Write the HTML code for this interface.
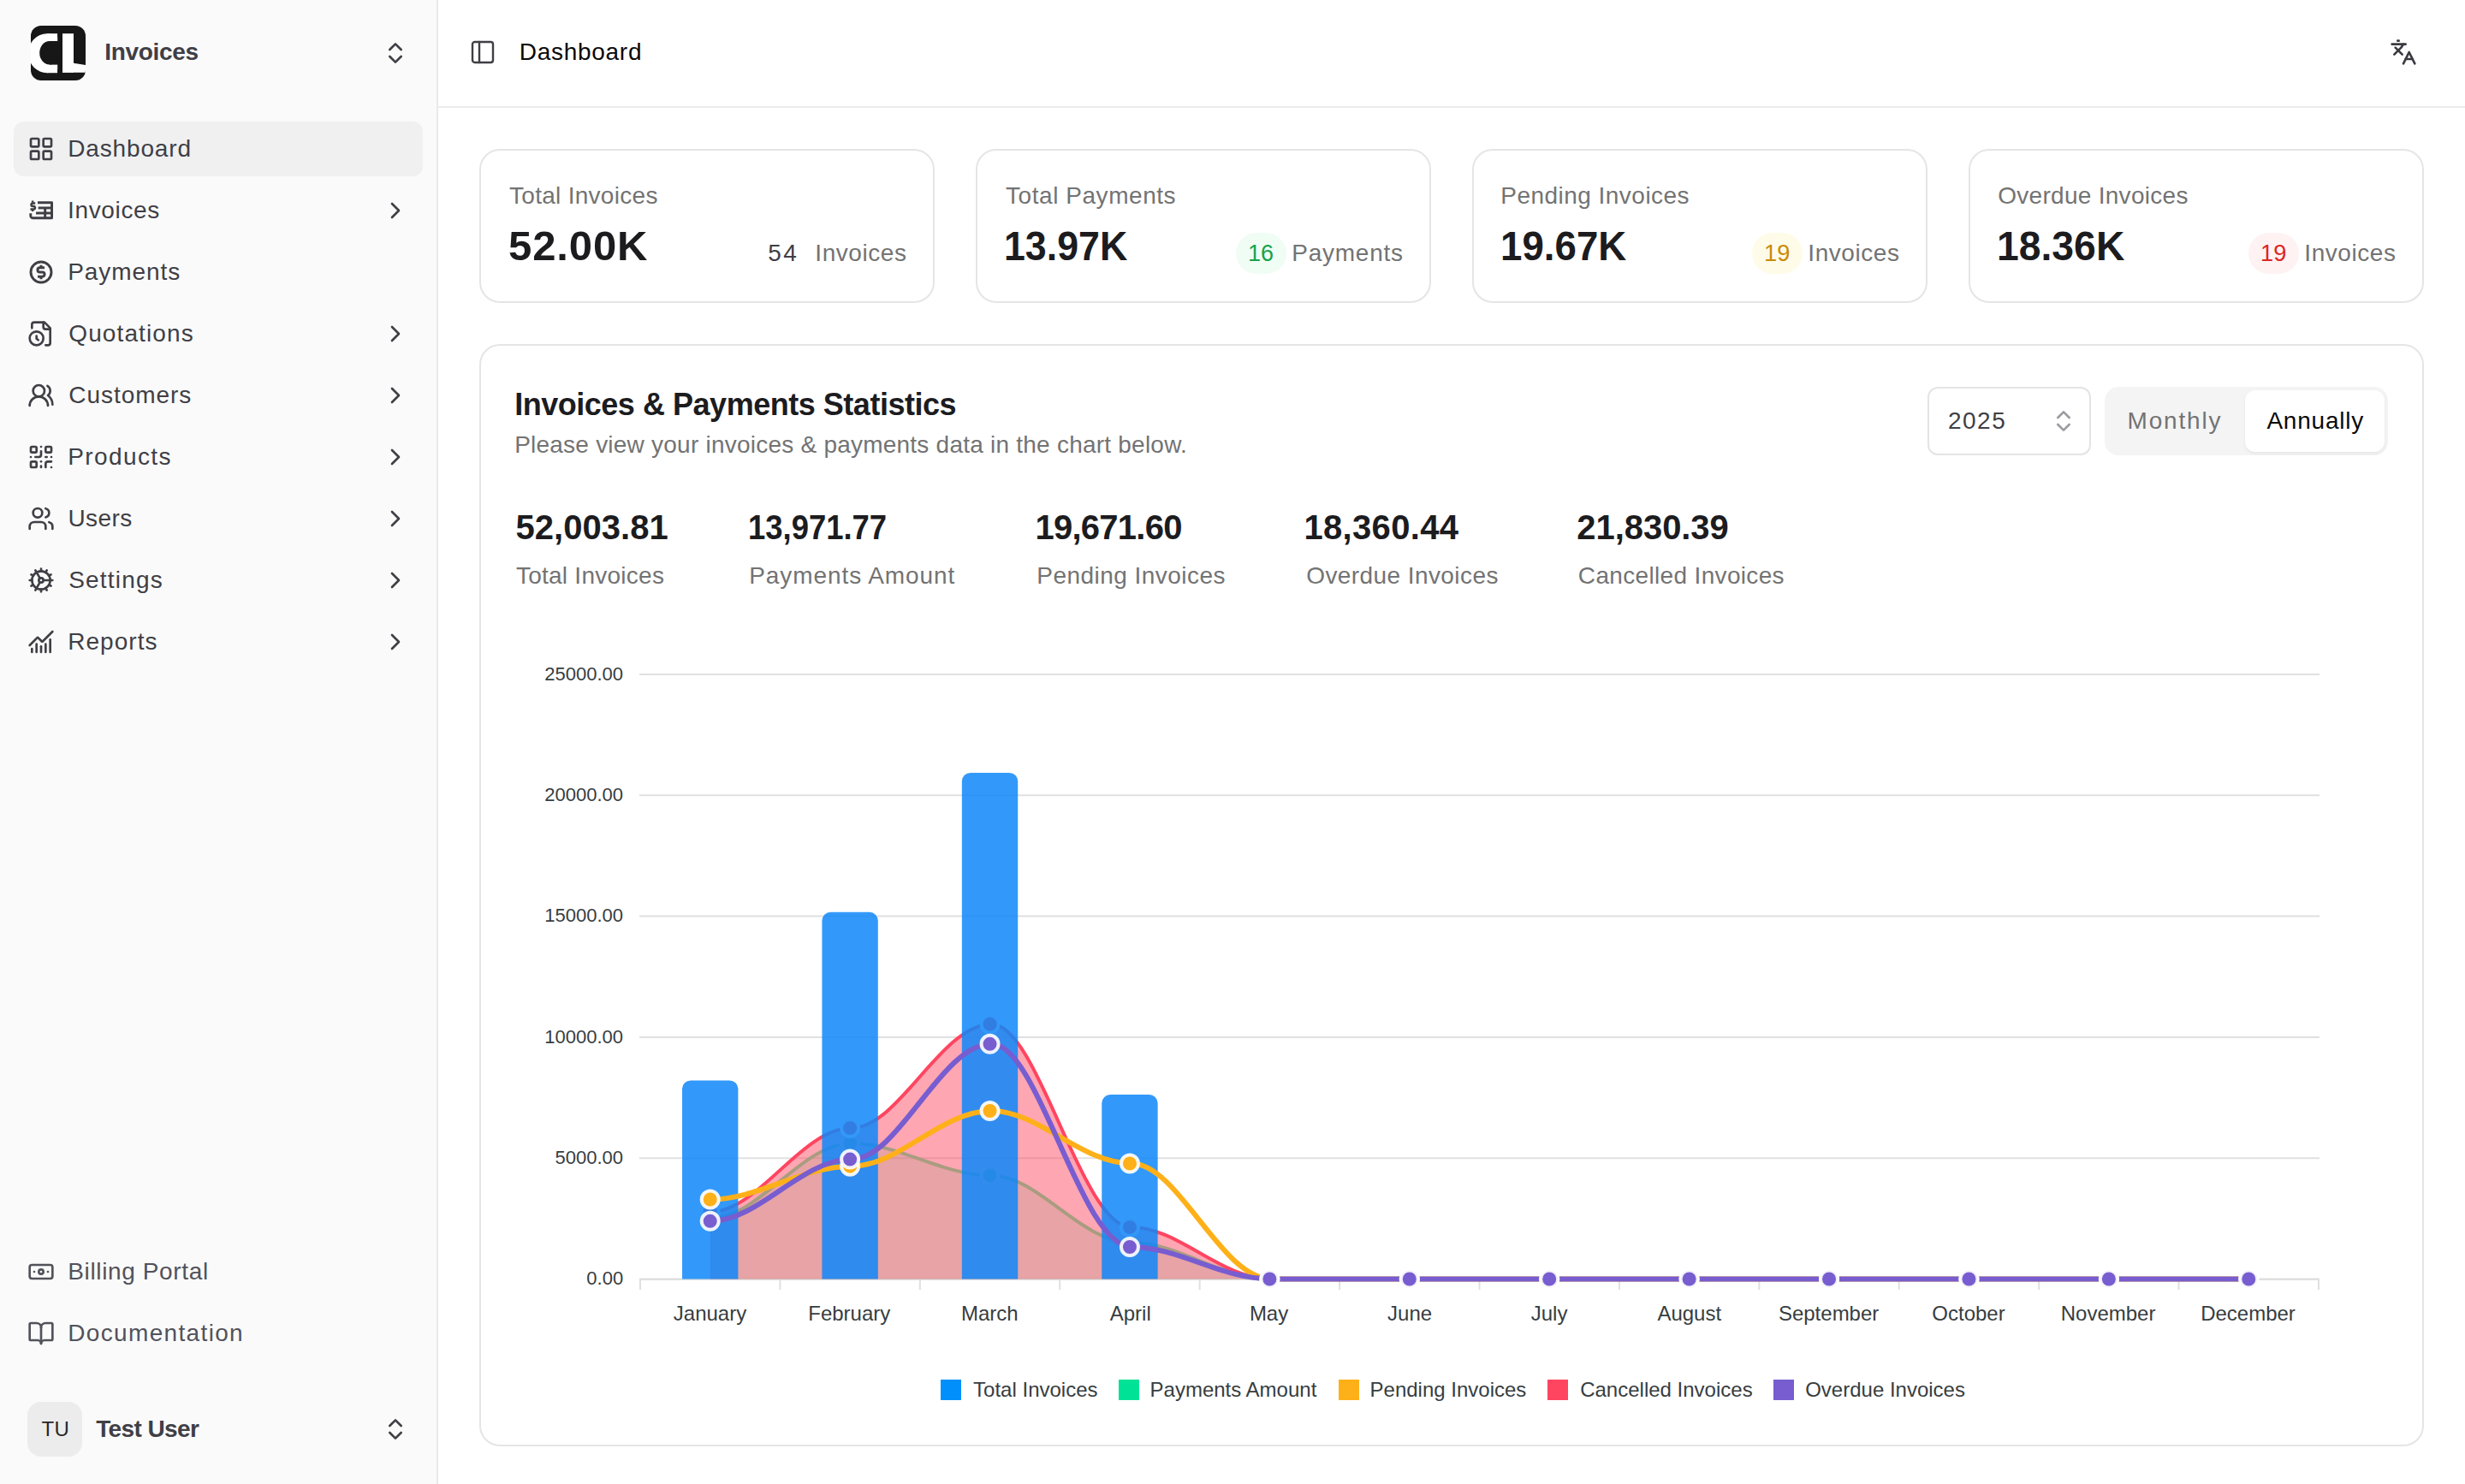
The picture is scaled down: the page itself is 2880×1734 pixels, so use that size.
<!DOCTYPE html>
<html><head><meta charset="utf-8"><title>Dashboard</title>
<style>
html,body{margin:0;padding:0;background:#fff;}
html{overflow:hidden;}
body{width:2880px;height:1734px;position:relative;overflow:hidden;font-family:"Liberation Sans",sans-serif;}
.t{position:absolute;white-space:nowrap;line-height:1;font-weight:400;}
.b{position:absolute;}
.i{position:absolute;overflow:visible;}
</style></head><body>
<div class="b" style="left:0px;top:0px;width:510px;height:1734px;background:#fafafa;"></div>
<div class="b" style="left:510px;top:0px;width:2px;height:1734px;background:#e9e9eb;"></div>
<svg class="i" style="left:36px;top:30px" width="64" height="64" viewBox="36 30 64 64">
<defs><clipPath id="lg"><rect x="36" y="30" width="64" height="64" rx="12"/></clipPath></defs>
<g clip-path="url(#lg)"><rect x="30" y="24" width="76" height="76" fill="#171717"/>
<ellipse cx="55" cy="62.2" rx="22" ry="23" fill="#fff"/><rect x="55" y="39.2" width="12.2" height="46" fill="#fff"/>
<ellipse cx="58" cy="61.8" rx="11.8" ry="13.8" fill="#171717"/><rect x="58" y="48" width="15" height="27.6" fill="#171717"/>
<rect x="67.2" y="30" width="5.8" height="64" fill="#171717"/>
<rect x="73" y="39.2" width="13" height="45.5" fill="#fff"/><path d="M73 75.5 L86 73.8 L100 76 V84.7 H73 Z" fill="#fff"/></g></svg>
<div class="t" style="left:122.25px;top:46.50px;font-size:28px;color:#3f3f46;letter-spacing:-0.321px;font-weight:700;">Invoices</div>
<svg class="i" style="left:446px;top:46px" width="32" height="32" viewBox="0 0 24 24" fill="none" stroke="#3f3f46" stroke-width="2" stroke-linecap="round" stroke-linejoin="round" ><path d="m7 15 5 5 5-5"/><path d="m7 9 5-5 5 5"/></svg>
<div class="b" style="left:16px;top:142px;width:478px;height:64px;background:#f0f0f1;border-radius:12px;"></div>
<svg class="i" style="left:32px;top:158px" width="32" height="32" viewBox="0 0 24 24" fill="none" stroke="#3f3f46" stroke-width="2" stroke-linecap="round" stroke-linejoin="round" ><rect width="7" height="7" x="3" y="3" rx="1"/><rect width="7" height="7" x="14" y="3" rx="1"/><rect width="7" height="7" x="14" y="14" rx="1"/><rect width="7" height="7" x="3" y="14" rx="1"/></svg>
<div class="t" style="left:79.25px;top:160.30px;font-size:28px;color:#3f3f46;letter-spacing:0.844px;">Dashboard</div>
<svg class="i" style="left:32px;top:230px" width="32" height="32" viewBox="0 0 24 24" fill="none" stroke="#3f3f46" stroke-width="2" stroke-linecap="round" stroke-linejoin="round" ><g stroke-width="2.2" stroke-linecap="butt" stroke-linejoin="round"><path d="M9 5H21.4V18.6H4.85a2 2 0 0 1-2-2V14.4"/><path d="M9.5 9.7H21.4"/><path d="M7.5 14.25H21.4"/><path d="M15.5 9.7V18.6"/></g><g stroke-width="1.9" stroke-linecap="butt"><path d="M6.9 5.6H4.7a1.3 1.3 0 0 0 0 2.6h0.7a1.3 1.3 0 0 1 0 2.6H2.6"/><path d="M4.6 3.4v1.6M4.6 11v1.7"/></g></svg>
<div class="t" style="left:79.00px;top:232.30px;font-size:28px;color:#3f3f46;letter-spacing:0.650px;">Invoices</div>
<svg class="i" style="left:446px;top:230px" width="32" height="32" viewBox="0 0 24 24" fill="none" stroke="#3f3f46" stroke-width="2" stroke-linecap="round" stroke-linejoin="round" ><path d="m9 18 6-6-6-6"/></svg>
<svg class="i" style="left:32px;top:302px" width="32" height="32" viewBox="0 0 24 24" fill="none" stroke="#3f3f46" stroke-width="2" stroke-linecap="round" stroke-linejoin="round" ><g stroke-width="2.2"><circle cx="12" cy="12" r="9"/><path stroke-linecap="butt" d="M15 8.1H10.9a1.95 1.95 0 0 0 0 3.9h2.2a1.95 1.95 0 0 1 0 3.9H9"/><path stroke-linecap="butt" d="M12 5.9v2M12 16.1v2"/></g></svg>
<div class="t" style="left:79.25px;top:304.30px;font-size:28px;color:#3f3f46;letter-spacing:0.936px;">Payments</div>
<svg class="i" style="left:32px;top:374px" width="32" height="32" viewBox="0 0 24 24" fill="none" stroke="#3f3f46" stroke-width="2" stroke-linecap="round" stroke-linejoin="round" ><path d="M16 22h2a2 2 0 0 0 2-2V7l-5-5H6a2 2 0 0 0-2 2v3"/><path d="M14 2v4a2 2 0 0 0 2 2h4"/><circle cx="8" cy="16" r="6"/><path d="M9.5 17.5 8 16.25V14"/></svg>
<div class="t" style="left:80.25px;top:376.30px;font-size:28px;color:#3f3f46;letter-spacing:1.117px;">Quotations</div>
<svg class="i" style="left:446px;top:374px" width="32" height="32" viewBox="0 0 24 24" fill="none" stroke="#3f3f46" stroke-width="2" stroke-linecap="round" stroke-linejoin="round" ><path d="m9 18 6-6-6-6"/></svg>
<svg class="i" style="left:32px;top:446px" width="32" height="32" viewBox="0 0 24 24" fill="none" stroke="#3f3f46" stroke-width="2" stroke-linecap="round" stroke-linejoin="round" ><path d="M18 21a8 8 0 0 0-16 0"/><circle cx="10" cy="8" r="5"/><path d="M22 20c0-3.37-2-6.5-4-8a5 5 0 0 0-.45-8.3"/></svg>
<div class="t" style="left:80.25px;top:448.30px;font-size:28px;color:#3f3f46;letter-spacing:0.969px;">Customers</div>
<svg class="i" style="left:446px;top:446px" width="32" height="32" viewBox="0 0 24 24" fill="none" stroke="#3f3f46" stroke-width="2" stroke-linecap="round" stroke-linejoin="round" ><path d="m9 18 6-6-6-6"/></svg>
<svg class="i" style="left:32px;top:518px" width="32" height="32" viewBox="0 0 24 24" fill="none" stroke="#3f3f46" stroke-width="2" stroke-linecap="round" stroke-linejoin="round" ><rect width="5" height="5" x="3" y="3" rx="1"/><rect width="5" height="5" x="16" y="3" rx="1"/><rect width="5" height="5" x="3" y="16" rx="1"/><path d="M21 16h-3a2 2 0 0 0-2 2v3"/><path d="M21 21v.01"/><path d="M12 7v3a2 2 0 0 1-2 2H7"/><path d="M3 12h.01"/><path d="M12 3h.01"/><path d="M12 16v.01"/><path d="M16 12h1"/><path d="M21 12v.01"/><path d="M12 21v-1"/></svg>
<div class="t" style="left:79.25px;top:520.30px;font-size:28px;color:#3f3f46;letter-spacing:1.393px;">Products</div>
<svg class="i" style="left:446px;top:518px" width="32" height="32" viewBox="0 0 24 24" fill="none" stroke="#3f3f46" stroke-width="2" stroke-linecap="round" stroke-linejoin="round" ><path d="m9 18 6-6-6-6"/></svg>
<svg class="i" style="left:32px;top:590px" width="32" height="32" viewBox="0 0 24 24" fill="none" stroke="#3f3f46" stroke-width="2" stroke-linecap="round" stroke-linejoin="round" ><path d="M16 21v-2a4 4 0 0 0-4-4H6a4 4 0 0 0-4 4v2"/><circle cx="9" cy="7" r="4"/><path d="M22 21v-2a4 4 0 0 0-3-3.87"/><path d="M16 3.13a4 4 0 0 1 0 7.75"/></svg>
<div class="t" style="left:79.50px;top:592.30px;font-size:28px;color:#3f3f46;letter-spacing:0.400px;">Users</div>
<svg class="i" style="left:446px;top:590px" width="32" height="32" viewBox="0 0 24 24" fill="none" stroke="#3f3f46" stroke-width="2" stroke-linecap="round" stroke-linejoin="round" ><path d="m9 18 6-6-6-6"/></svg>
<svg class="i" style="left:32px;top:662px" width="32" height="32" viewBox="0 0 24 24" fill="none" stroke="#3f3f46" stroke-width="2" stroke-linecap="round" stroke-linejoin="round" ><path d="M12 20a8 8 0 1 0 0-16 8 8 0 0 0 0 16Z"/><path d="M12 14a2 2 0 1 0 0-4 2 2 0 0 0 0 4Z"/><path d="M12 2v2"/><path d="M12 22v-2"/><path d="m17 20.66-1-1.73"/><path d="M11 10.27 7 3.34"/><path d="m20.66 17-1.73-1"/><path d="m3.34 7 1.73 1"/><path d="M14 12h8"/><path d="M2 12h2"/><path d="m20.66 7-1.73 1"/><path d="m3.34 17 1.73-1"/><path d="m17 3.34-1 1.73"/><path d="m11 13.73-4 6.93"/></svg>
<div class="t" style="left:80.25px;top:664.30px;font-size:28px;color:#3f3f46;letter-spacing:1.186px;">Settings</div>
<svg class="i" style="left:446px;top:662px" width="32" height="32" viewBox="0 0 24 24" fill="none" stroke="#3f3f46" stroke-width="2" stroke-linecap="round" stroke-linejoin="round" ><path d="m9 18 6-6-6-6"/></svg>
<svg class="i" style="left:32px;top:734px" width="32" height="32" viewBox="0 0 24 24" fill="none" stroke="#3f3f46" stroke-width="2" stroke-linecap="round" stroke-linejoin="round" ><path d="M12 16v5"/><path d="M16 14v7"/><path d="M20 10v11"/><path d="m22 3-8.646 8.646a.5.5 0 0 1-.708 0L9.354 8.354a.5.5 0 0 0-.707 0L2 15"/><path d="M4 18v3"/><path d="M8 14v7"/></svg>
<div class="t" style="left:79.25px;top:736.30px;font-size:28px;color:#3f3f46;letter-spacing:1.025px;">Reports</div>
<svg class="i" style="left:446px;top:734px" width="32" height="32" viewBox="0 0 24 24" fill="none" stroke="#3f3f46" stroke-width="2" stroke-linecap="round" stroke-linejoin="round" ><path d="m9 18 6-6-6-6"/></svg>
<svg class="i" style="left:32px;top:1470px" width="32" height="32" viewBox="0 0 24 24" fill="none" stroke="#52525b" stroke-width="2" stroke-linecap="round" stroke-linejoin="round" ><rect width="20" height="12" x="2" y="6" rx="2"/><circle cx="12" cy="12" r="2"/><path d="M6 12h.01M18 12h.01"/></svg>
<div class="t" style="left:79.25px;top:1472.30px;font-size:28px;color:#52525b;letter-spacing:0.635px;">Billing Portal</div>
<svg class="i" style="left:32px;top:1542px" width="32" height="32" viewBox="0 0 24 24" fill="none" stroke="#52525b" stroke-width="2" stroke-linecap="round" stroke-linejoin="round" ><path d="M12 7v14"/><path d="M3 18a1 1 0 0 1-1-1V4a1 1 0 0 1 1-1h5a4 4 0 0 1 4 4 4 4 0 0 1 4-4h5a1 1 0 0 1 1 1v13a1 1 0 0 1-1 1h-6a3 3 0 0 0-3 3 3 3 0 0 0-3-3z"/></svg>
<div class="t" style="left:79.25px;top:1544.30px;font-size:28px;color:#52525b;letter-spacing:1.342px;">Documentation</div>
<div class="b" style="left:32px;top:1638px;width:64px;height:64px;background:#ececec;border-radius:16px;"></div>
<div class="t" style="left:48.50px;top:1658.18px;font-size:24px;color:#27272a;letter-spacing:0.250px;">TU</div>
<div class="t" style="left:112.15px;top:1656.10px;font-size:28px;color:#3f3f46;letter-spacing:-0.588px;font-weight:700;">Test User</div>
<svg class="i" style="left:446px;top:1654px" width="32" height="32" viewBox="0 0 24 24" fill="none" stroke="#3f3f46" stroke-width="2" stroke-linecap="round" stroke-linejoin="round" ><path d="m7 15 5 5 5-5"/><path d="m7 9 5-5 5 5"/></svg>
<div class="b" style="left:512px;top:124px;width:2368px;height:2px;background:#ececee;"></div>
<svg class="i" style="left:548px;top:45px" width="32" height="32" viewBox="0 0 24 24" fill="none" stroke="#3f3f46" stroke-width="1.8" stroke-linecap="round" stroke-linejoin="round" ><rect width="18" height="18" x="3" y="3" rx="2"/><path d="M9 3v18"/></svg>
<div class="t" style="left:606.75px;top:47.30px;font-size:28px;color:#0a0a0a;letter-spacing:0.719px;">Dashboard</div>
<svg class="i" style="left:2792px;top:45px" width="32" height="32" viewBox="0 0 24 24" fill="none" stroke="#3a3a42" stroke-width="2" stroke-linecap="round" stroke-linejoin="round" ><path d="m5 8 6 6"/><path d="m4 14 6-6 2-3"/><path d="M2 5h12"/><path d="M7 2h1"/><path d="m22 22-5-10-5 10"/><path d="M14 18h6"/></svg>
<div class="b" style="left:560px;top:174px;width:532px;height:180px;box-sizing:border-box;border:2px solid #e5e5e5;border-radius:24px;background:#fff;"></div>
<div class="t" style="left:595.00px;top:214.70px;font-size:28px;color:#737373;letter-spacing:0.288px;">Total Invoices</div>
<div class="t" style="left:594.00px;top:263.32px;font-size:49px;color:#1c1c1f;letter-spacing:0.900px;font-weight:700;">52.00K</div>
<div class="t" style="left:952.30px;top:282.30px;font-size:28px;color:#737373;letter-spacing:0.564px;">Invoices</div>
<div class="t" style="left:897.30px;top:282.30px;font-size:28px;color:#3f3f46;letter-spacing:2.500px;">54</div>
<div class="b" style="left:1140px;top:174px;width:532px;height:180px;box-sizing:border-box;border:2px solid #e5e5e5;border-radius:24px;background:#fff;"></div>
<div class="t" style="left:1175.00px;top:214.70px;font-size:28px;color:#737373;letter-spacing:0.554px;">Total Payments</div>
<div class="t" style="left:1172.76px;top:263.32px;font-size:49px;color:#1c1c1f;transform:scaleX(0.9126);transform-origin:0 0;font-weight:700;">13.97K</div>
<div class="t" style="left:1509.25px;top:282.30px;font-size:28px;color:#737373;letter-spacing:0.750px;">Payments</div>
<div class="b" style="left:1444.0px;top:272px;width:59px;height:48px;background:#f0fdf4;border-radius:24px;"></div>
<div class="t" style="left:1458.07px;top:282.30px;font-size:28px;color:#16a34a;transform:scaleX(0.9643);transform-origin:0 0;">16</div>
<div class="b" style="left:1720px;top:174px;width:532px;height:180px;box-sizing:border-box;border:2px solid #e5e5e5;border-radius:24px;background:#fff;"></div>
<div class="t" style="left:1753.25px;top:214.70px;font-size:28px;color:#737373;letter-spacing:0.473px;">Pending Invoices</div>
<div class="t" style="left:1752.70px;top:263.32px;font-size:49px;color:#1c1c1f;transform:scaleX(0.9320);transform-origin:0 0;font-weight:700;">19.67K</div>
<div class="t" style="left:2112.30px;top:282.30px;font-size:28px;color:#737373;letter-spacing:0.564px;">Invoices</div>
<div class="b" style="left:2047.3px;top:272px;width:59px;height:48px;background:#fefce8;border-radius:24px;"></div>
<div class="t" style="left:2061.35px;top:282.30px;font-size:28px;color:#ca8a04;transform:scaleX(0.9730);transform-origin:0 0;">19</div>
<div class="b" style="left:2300px;top:174px;width:532px;height:180px;box-sizing:border-box;border:2px solid #e5e5e5;border-radius:24px;background:#fff;"></div>
<div class="t" style="left:2334.25px;top:214.70px;font-size:28px;color:#737373;letter-spacing:0.283px;">Overdue Invoices</div>
<div class="t" style="left:2332.67px;top:263.32px;font-size:49px;color:#1c1c1f;transform:scaleX(0.9450);transform-origin:0 0;font-weight:700;">18.36K</div>
<div class="t" style="left:2692.30px;top:282.30px;font-size:28px;color:#737373;letter-spacing:0.564px;">Invoices</div>
<div class="b" style="left:2627.3px;top:272px;width:59px;height:48px;background:#fef2f2;border-radius:24px;"></div>
<div class="t" style="left:2641.35px;top:282.30px;font-size:28px;color:#dc2626;transform:scaleX(0.9730);transform-origin:0 0;">19</div>
<div class="b" style="left:560px;top:402px;width:2272px;height:1288px;box-sizing:border-box;border:2px solid #e5e5e5;border-radius:24px;background:#fff;"></div>
<div class="t" style="left:601.15px;top:454.53px;font-size:36px;color:#1c1c1f;letter-spacing:-0.474px;font-weight:700;">Invoices &amp; Payments Statistics</div>
<div class="t" style="left:601.15px;top:506.10px;font-size:28px;color:#737373;letter-spacing:0.229px;">Please view your invoices &amp; payments data in the chart below.</div>
<div class="t" style="left:602.40px;top:596.14px;font-size:40px;color:#1c1c1f;letter-spacing:0.062px;font-weight:700;">52,003.81</div>
<div class="t" style="left:602.90px;top:659.30px;font-size:28px;color:#737373;letter-spacing:0.258px;">Total Invoices</div>
<div class="t" style="left:873.72px;top:596.14px;font-size:40px;color:#1c1c1f;transform:scaleX(0.9111);transform-origin:0 0;font-weight:700;">13,971.77</div>
<div class="t" style="left:875.25px;top:659.30px;font-size:28px;color:#737373;letter-spacing:0.914px;">Payments Amount</div>
<div class="t" style="left:1209.50px;top:596.14px;font-size:40px;color:#1c1c1f;letter-spacing:-0.750px;font-weight:700;">19,671.60</div>
<div class="t" style="left:1211.25px;top:659.30px;font-size:28px;color:#737373;letter-spacing:0.467px;">Pending Invoices</div>
<div class="t" style="left:1523.50px;top:596.14px;font-size:40px;color:#1c1c1f;letter-spacing:0.312px;font-weight:700;">18,360.44</div>
<div class="t" style="left:1526.25px;top:659.30px;font-size:28px;color:#737373;letter-spacing:0.417px;">Overdue Invoices</div>
<div class="t" style="left:1842.35px;top:596.14px;font-size:40px;color:#1c1c1f;letter-spacing:-0.062px;font-weight:700;">21,830.39</div>
<div class="t" style="left:1843.85px;top:659.30px;font-size:28px;color:#737373;letter-spacing:0.338px;">Cancelled Invoices</div>
<div class="b" style="left:2252px;top:452px;width:191px;height:80px;box-sizing:border-box;border:2px solid #e4e4e7;border-radius:12px;background:#fff;"></div>
<div class="t" style="left:2275.95px;top:478.30px;font-size:28px;color:#3f3f46;letter-spacing:1.500px;">2025</div>
<svg class="i" style="left:2395px;top:476px" width="32" height="32" viewBox="0 0 24 24" fill="none" stroke="#9b9ba1" stroke-width="2" stroke-linecap="round" stroke-linejoin="round" ><path d="m7 15 5 5 5-5"/><path d="m7 9 5-5 5 5"/></svg>
<div class="b" style="left:2459px;top:452px;width:331px;height:80px;background:#f4f4f5;border-radius:16px;"></div>
<div class="b" style="left:2623px;top:456px;width:163px;height:72px;background:#fff;border-radius:12px;box-shadow:0 2px 4px rgba(0,0,0,.06);"></div>
<div class="t" style="left:2485.55px;top:478.30px;font-size:28px;color:#737373;letter-spacing:1.808px;">Monthly</div>
<div class="t" style="left:2648.40px;top:478.30px;font-size:28px;color:#0a0a0a;letter-spacing:0.786px;">Annually</div>
<svg class="i" style="left:0;top:0" width="2880" height="1734" viewBox="0 0 2880 1734"><line x1="747.0" x2="2710.0" y1="1494.50" y2="1494.50" stroke="#e0e0e0" stroke-width="2"/><line x1="747.0" x2="2710.0" y1="1353.20" y2="1353.20" stroke="#e0e0e0" stroke-width="2"/><line x1="747.0" x2="2710.0" y1="1211.90" y2="1211.90" stroke="#e0e0e0" stroke-width="2"/><line x1="747.0" x2="2710.0" y1="1070.60" y2="1070.60" stroke="#e0e0e0" stroke-width="2"/><line x1="747.0" x2="2710.0" y1="929.30" y2="929.30" stroke="#e0e0e0" stroke-width="2"/><line x1="747.0" x2="2710.0" y1="788.00" y2="788.00" stroke="#e0e0e0" stroke-width="2"/><line x1="747.0" x2="2710.0" y1="1495.10" y2="1495.10" stroke="#e0e0e0" stroke-width="2"/><line x1="748.00" x2="748.00" y1="1495.70" y2="1507.00" stroke="#e0e0e0" stroke-width="2"/><line x1="911.42" x2="911.42" y1="1495.70" y2="1507.00" stroke="#e0e0e0" stroke-width="2"/><line x1="1074.83" x2="1074.83" y1="1495.70" y2="1507.00" stroke="#e0e0e0" stroke-width="2"/><line x1="1238.25" x2="1238.25" y1="1495.70" y2="1507.00" stroke="#e0e0e0" stroke-width="2"/><line x1="1401.67" x2="1401.67" y1="1495.70" y2="1507.00" stroke="#e0e0e0" stroke-width="2"/><line x1="1565.08" x2="1565.08" y1="1495.70" y2="1507.00" stroke="#e0e0e0" stroke-width="2"/><line x1="1728.50" x2="1728.50" y1="1495.70" y2="1507.00" stroke="#e0e0e0" stroke-width="2"/><line x1="1891.92" x2="1891.92" y1="1495.70" y2="1507.00" stroke="#e0e0e0" stroke-width="2"/><line x1="2055.33" x2="2055.33" y1="1495.70" y2="1507.00" stroke="#e0e0e0" stroke-width="2"/><line x1="2218.75" x2="2218.75" y1="1495.70" y2="1507.00" stroke="#e0e0e0" stroke-width="2"/><line x1="2382.17" x2="2382.17" y1="1495.70" y2="1507.00" stroke="#e0e0e0" stroke-width="2"/><line x1="2545.58" x2="2545.58" y1="1495.70" y2="1507.00" stroke="#e0e0e0" stroke-width="2"/><line x1="2709.00" x2="2709.00" y1="1495.70" y2="1507.00" stroke="#e0e0e0" stroke-width="2"/><path d="M829.71 1423.79C886.90 1423.79 935.93 1335.90 995.12 1335.90C1050.32 1335.90 1099.35 1373.49 1158.54 1373.49C1213.74 1373.49 1262.76 1452.11 1321.96 1452.11C1377.15 1452.11 1426.18 1494.50 1485.38 1494.50C1540.57 1494.50 1589.60 1494.50 1648.79 1494.50C1703.99 1494.50 1753.01 1494.50 1812.21 1494.50C1867.40 1494.50 1916.43 1494.50 1975.62 1494.50C2030.82 1494.50 2079.85 1494.50 2139.04 1494.50C2194.24 1494.50 2243.26 1494.50 2302.46 1494.50C2357.65 1494.50 2406.68 1494.50 2465.88 1494.50C2521.07 1494.50 2570.10 1494.50 2629.29 1494.50L2627.29 1494.5L829.71 1494.5Z" fill="#5BEC9D" fill-opacity="0.28"/><path d="M829.71 1423.79C886.90 1423.79 935.93 1335.90 995.12 1335.90C1050.32 1335.90 1099.35 1373.49 1158.54 1373.49C1213.74 1373.49 1262.76 1452.11 1321.96 1452.11C1377.15 1452.11 1426.18 1494.50 1485.38 1494.50C1540.57 1494.50 1589.60 1494.50 1648.79 1494.50C1703.99 1494.50 1753.01 1494.50 1812.21 1494.50C1867.40 1494.50 1916.43 1494.50 1975.62 1494.50C2030.82 1494.50 2079.85 1494.50 2139.04 1494.50C2194.24 1494.50 2243.26 1494.50 2302.46 1494.50C2357.65 1494.50 2406.68 1494.50 2465.88 1494.50C2521.07 1494.50 2570.10 1494.50 2629.29 1494.50" fill="none" stroke="#5BEC9D" stroke-width="4" stroke-linecap="butt"/><circle cx="829.71" cy="1423.79" r="10" fill="#5BEC9D" stroke="#fff" stroke-opacity="0.9" stroke-width="4" opacity="1"/><circle cx="993.12" cy="1335.90" r="10" fill="#5BEC9D" stroke="#fff" stroke-opacity="0.9" stroke-width="4" opacity="1"/><circle cx="1156.54" cy="1373.49" r="10" fill="#5BEC9D" stroke="#fff" stroke-opacity="0.9" stroke-width="4" opacity="1"/><circle cx="1319.96" cy="1452.11" r="10" fill="#5BEC9D" stroke="#fff" stroke-opacity="0.9" stroke-width="4" opacity="1"/><path d="M829.71 1415.99C886.90 1415.99 935.93 1318.02 995.12 1318.02C1050.32 1318.02 1099.35 1196.78 1158.54 1196.78C1213.74 1196.78 1262.76 1433.91 1321.96 1433.91C1377.15 1433.91 1426.18 1494.50 1485.38 1494.50C1540.57 1494.50 1589.60 1494.50 1648.79 1494.50C1703.99 1494.50 1753.01 1494.50 1812.21 1494.50C1867.40 1494.50 1916.43 1494.50 1975.62 1494.50C2030.82 1494.50 2079.85 1494.50 2139.04 1494.50C2194.24 1494.50 2243.26 1494.50 2302.46 1494.50C2357.65 1494.50 2406.68 1494.50 2465.88 1494.50C2521.07 1494.50 2570.10 1494.50 2629.29 1494.50L2627.29 1494.5L829.71 1494.5Z" fill="#FF4560" fill-opacity="0.48"/><path d="M829.71 1415.99C886.90 1415.99 935.93 1318.02 995.12 1318.02C1050.32 1318.02 1099.35 1196.78 1158.54 1196.78C1213.74 1196.78 1262.76 1433.91 1321.96 1433.91C1377.15 1433.91 1426.18 1494.50 1485.38 1494.50C1540.57 1494.50 1589.60 1494.50 1648.79 1494.50C1703.99 1494.50 1753.01 1494.50 1812.21 1494.50C1867.40 1494.50 1916.43 1494.50 1975.62 1494.50C2030.82 1494.50 2079.85 1494.50 2139.04 1494.50C2194.24 1494.50 2243.26 1494.50 2302.46 1494.50C2357.65 1494.50 2406.68 1494.50 2465.88 1494.50C2521.07 1494.50 2570.10 1494.50 2629.29 1494.50" fill="none" stroke="#FF4560" stroke-width="4" stroke-linecap="butt"/><circle cx="829.71" cy="1415.99" r="10" fill="#FF4560" stroke="#fff" stroke-opacity="0.9" stroke-width="4" opacity="1"/><circle cx="993.12" cy="1318.02" r="10" fill="#FF4560" stroke="#fff" stroke-opacity="0.9" stroke-width="4" opacity="1"/><circle cx="1156.54" cy="1196.78" r="10" fill="#FF4560" stroke="#fff" stroke-opacity="0.9" stroke-width="4" opacity="1"/><circle cx="1319.96" cy="1433.91" r="10" fill="#FF4560" stroke="#fff" stroke-opacity="0.9" stroke-width="4" opacity="1"/><path d="M797.03 1494.5V1272.40a10 10 0 0 1 10 -10H852.39a10 10 0 0 1 10 10V1494.5Z" fill="#0E87F9" fill-opacity="0.85"/><path d="M960.44 1494.5V1075.71a10 10 0 0 1 10 -10H1015.81a10 10 0 0 1 10 10V1494.5Z" fill="#0E87F9" fill-opacity="0.85"/><path d="M1123.86 1494.5V912.91a10 10 0 0 1 10 -10H1179.22a10 10 0 0 1 10 10V1494.5Z" fill="#0E87F9" fill-opacity="0.85"/><path d="M1287.27 1494.5V1289.02a10 10 0 0 1 10 -10H1342.64a10 10 0 0 1 10 10V1494.5Z" fill="#0E87F9" fill-opacity="0.85"/><path d="M829.71 1401.50C886.90 1401.50 935.93 1362.70 995.12 1362.70C1050.32 1362.70 1099.35 1298.01 1158.54 1298.01C1213.74 1298.01 1262.76 1359.50 1321.96 1359.50C1377.15 1359.50 1426.18 1494.50 1485.38 1494.50C1540.57 1494.50 1589.60 1494.50 1648.79 1494.50C1703.99 1494.50 1753.01 1494.50 1812.21 1494.50C1867.40 1494.50 1916.43 1494.50 1975.62 1494.50C2030.82 1494.50 2079.85 1494.50 2139.04 1494.50C2194.24 1494.50 2243.26 1494.50 2302.46 1494.50C2357.65 1494.50 2406.68 1494.50 2465.88 1494.50C2521.07 1494.50 2570.10 1494.50 2629.29 1494.50" fill="none" stroke="#FEB019" stroke-width="6" stroke-linecap="butt"/><path d="M829.71 1426.82C886.90 1426.82 935.93 1354.61 995.12 1354.61C1050.32 1354.61 1099.35 1219.81 1158.54 1219.81C1213.74 1219.81 1262.76 1457.00 1321.96 1457.00C1377.15 1457.00 1426.18 1494.50 1485.38 1494.50C1540.57 1494.50 1589.60 1494.50 1648.79 1494.50C1703.99 1494.50 1753.01 1494.50 1812.21 1494.50C1867.40 1494.50 1916.43 1494.50 1975.62 1494.50C2030.82 1494.50 2079.85 1494.50 2139.04 1494.50C2194.24 1494.50 2243.26 1494.50 2302.46 1494.50C2357.65 1494.50 2406.68 1494.50 2465.88 1494.50C2521.07 1494.50 2570.10 1494.50 2629.29 1494.50" fill="none" stroke="#775DD0" stroke-width="6" stroke-linecap="butt"/><circle cx="829.71" cy="1401.50" r="10" fill="#FEB019" stroke="#fff" stroke-opacity="0.9" stroke-width="4" opacity="1"/><circle cx="993.12" cy="1362.70" r="10" fill="#FEB019" stroke="#fff" stroke-opacity="0.9" stroke-width="4" opacity="1"/><circle cx="1156.54" cy="1298.01" r="10" fill="#FEB019" stroke="#fff" stroke-opacity="0.9" stroke-width="4" opacity="1"/><circle cx="1319.96" cy="1359.50" r="10" fill="#FEB019" stroke="#fff" stroke-opacity="0.9" stroke-width="4" opacity="1"/><circle cx="1483.38" cy="1494.50" r="10" fill="#FEB019" stroke="#fff" stroke-opacity="0.9" stroke-width="4" opacity="1"/><circle cx="1646.79" cy="1494.50" r="10" fill="#FEB019" stroke="#fff" stroke-opacity="0.9" stroke-width="4" opacity="1"/><circle cx="1810.21" cy="1494.50" r="10" fill="#FEB019" stroke="#fff" stroke-opacity="0.9" stroke-width="4" opacity="1"/><circle cx="1973.62" cy="1494.50" r="10" fill="#FEB019" stroke="#fff" stroke-opacity="0.9" stroke-width="4" opacity="1"/><circle cx="2137.04" cy="1494.50" r="10" fill="#FEB019" stroke="#fff" stroke-opacity="0.9" stroke-width="4" opacity="1"/><circle cx="2300.46" cy="1494.50" r="10" fill="#FEB019" stroke="#fff" stroke-opacity="0.9" stroke-width="4" opacity="1"/><circle cx="2463.88" cy="1494.50" r="10" fill="#FEB019" stroke="#fff" stroke-opacity="0.9" stroke-width="4" opacity="1"/><circle cx="2627.29" cy="1494.50" r="10" fill="#FEB019" stroke="#fff" stroke-opacity="0.9" stroke-width="4" opacity="1"/><circle cx="829.71" cy="1426.82" r="10" fill="#775DD0" stroke="#fff" stroke-opacity="0.9" stroke-width="4" opacity="1"/><circle cx="993.12" cy="1354.61" r="10" fill="#775DD0" stroke="#fff" stroke-opacity="0.9" stroke-width="4" opacity="1"/><circle cx="1156.54" cy="1219.81" r="10" fill="#775DD0" stroke="#fff" stroke-opacity="0.9" stroke-width="4" opacity="1"/><circle cx="1319.96" cy="1457.00" r="10" fill="#775DD0" stroke="#fff" stroke-opacity="0.9" stroke-width="4" opacity="1"/><circle cx="1483.38" cy="1494.50" r="10" fill="#775DD0" stroke="#fff" stroke-opacity="0.9" stroke-width="4" opacity="1"/><circle cx="1646.79" cy="1494.50" r="10" fill="#775DD0" stroke="#fff" stroke-opacity="0.9" stroke-width="4" opacity="1"/><circle cx="1810.21" cy="1494.50" r="10" fill="#775DD0" stroke="#fff" stroke-opacity="0.9" stroke-width="4" opacity="1"/><circle cx="1973.62" cy="1494.50" r="10" fill="#775DD0" stroke="#fff" stroke-opacity="0.9" stroke-width="4" opacity="1"/><circle cx="2137.04" cy="1494.50" r="10" fill="#775DD0" stroke="#fff" stroke-opacity="0.9" stroke-width="4" opacity="1"/><circle cx="2300.46" cy="1494.50" r="10" fill="#775DD0" stroke="#fff" stroke-opacity="0.9" stroke-width="4" opacity="1"/><circle cx="2463.88" cy="1494.50" r="10" fill="#775DD0" stroke="#fff" stroke-opacity="0.9" stroke-width="4" opacity="1"/><circle cx="2627.29" cy="1494.50" r="10" fill="#775DD0" stroke="#fff" stroke-opacity="0.9" stroke-width="4" opacity="1"/></svg>
<div class="t" style="left:685.30px;top:1483.38px;font-size:22px;color:#373d3f;">0.00</div>
<div class="t" style="left:648.55px;top:1342.08px;font-size:22px;color:#373d3f;">5000.00</div>
<div class="t" style="left:636.30px;top:1200.78px;font-size:22px;color:#373d3f;">10000.00</div>
<div class="t" style="left:636.30px;top:1059.48px;font-size:22px;color:#373d3f;">15000.00</div>
<div class="t" style="left:636.30px;top:918.18px;font-size:22px;color:#373d3f;">20000.00</div>
<div class="t" style="left:636.30px;top:776.88px;font-size:22px;color:#373d3f;">25000.00</div>
<div class="t" style="left:786.83px;top:1522.68px;font-size:24px;color:#373d3f;">January</div>
<div class="t" style="left:944.25px;top:1522.68px;font-size:24px;color:#373d3f;">February</div>
<div class="t" style="left:1123.04px;top:1522.68px;font-size:24px;color:#373d3f;">March</div>
<div class="t" style="left:1296.71px;top:1522.68px;font-size:24px;color:#373d3f;">April</div>
<div class="t" style="left:1459.88px;top:1522.68px;font-size:24px;color:#373d3f;">May</div>
<div class="t" style="left:1621.04px;top:1522.68px;font-size:24px;color:#373d3f;">June</div>
<div class="t" style="left:1788.71px;top:1522.68px;font-size:24px;color:#373d3f;">July</div>
<div class="t" style="left:1936.38px;top:1522.68px;font-size:24px;color:#373d3f;">August</div>
<div class="t" style="left:2077.92px;top:1522.68px;font-size:24px;color:#373d3f;">September</div>
<div class="t" style="left:2257.33px;top:1522.68px;font-size:24px;color:#373d3f;">October</div>
<div class="t" style="left:2407.75px;top:1522.68px;font-size:24px;color:#373d3f;">November</div>
<div class="t" style="left:2571.17px;top:1522.68px;font-size:24px;color:#373d3f;">December</div>
<div class="b" style="left:1099px;top:1612px;width:24px;height:24px;background:#008FFB;"></div>
<div class="t" style="left:1137.10px;top:1611.68px;font-size:24px;color:#373d3f;">Total Invoices</div>
<div class="b" style="left:1307px;top:1612px;width:24px;height:24px;background:#00E396;"></div>
<div class="t" style="left:1343.55px;top:1611.68px;font-size:24px;color:#373d3f;">Payments Amount</div>
<div class="b" style="left:1564.2px;top:1612px;width:24px;height:24px;background:#FEB019;"></div>
<div class="t" style="left:1600.55px;top:1611.68px;font-size:24px;color:#373d3f;">Pending Invoices</div>
<div class="b" style="left:1808.3px;top:1612px;width:24px;height:24px;background:#FF4560;"></div>
<div class="t" style="left:1846.20px;top:1611.68px;font-size:24px;color:#373d3f;">Cancelled Invoices</div>
<div class="b" style="left:2072px;top:1612px;width:24px;height:24px;background:#775DD0;"></div>
<div class="t" style="left:2109.20px;top:1611.68px;font-size:24px;color:#373d3f;">Overdue Invoices</div>
<script>(function(){var w=window.innerWidth;if(w&&w!==2880){document.body.style.zoom=w/2880;}})();</script>
</body></html>
